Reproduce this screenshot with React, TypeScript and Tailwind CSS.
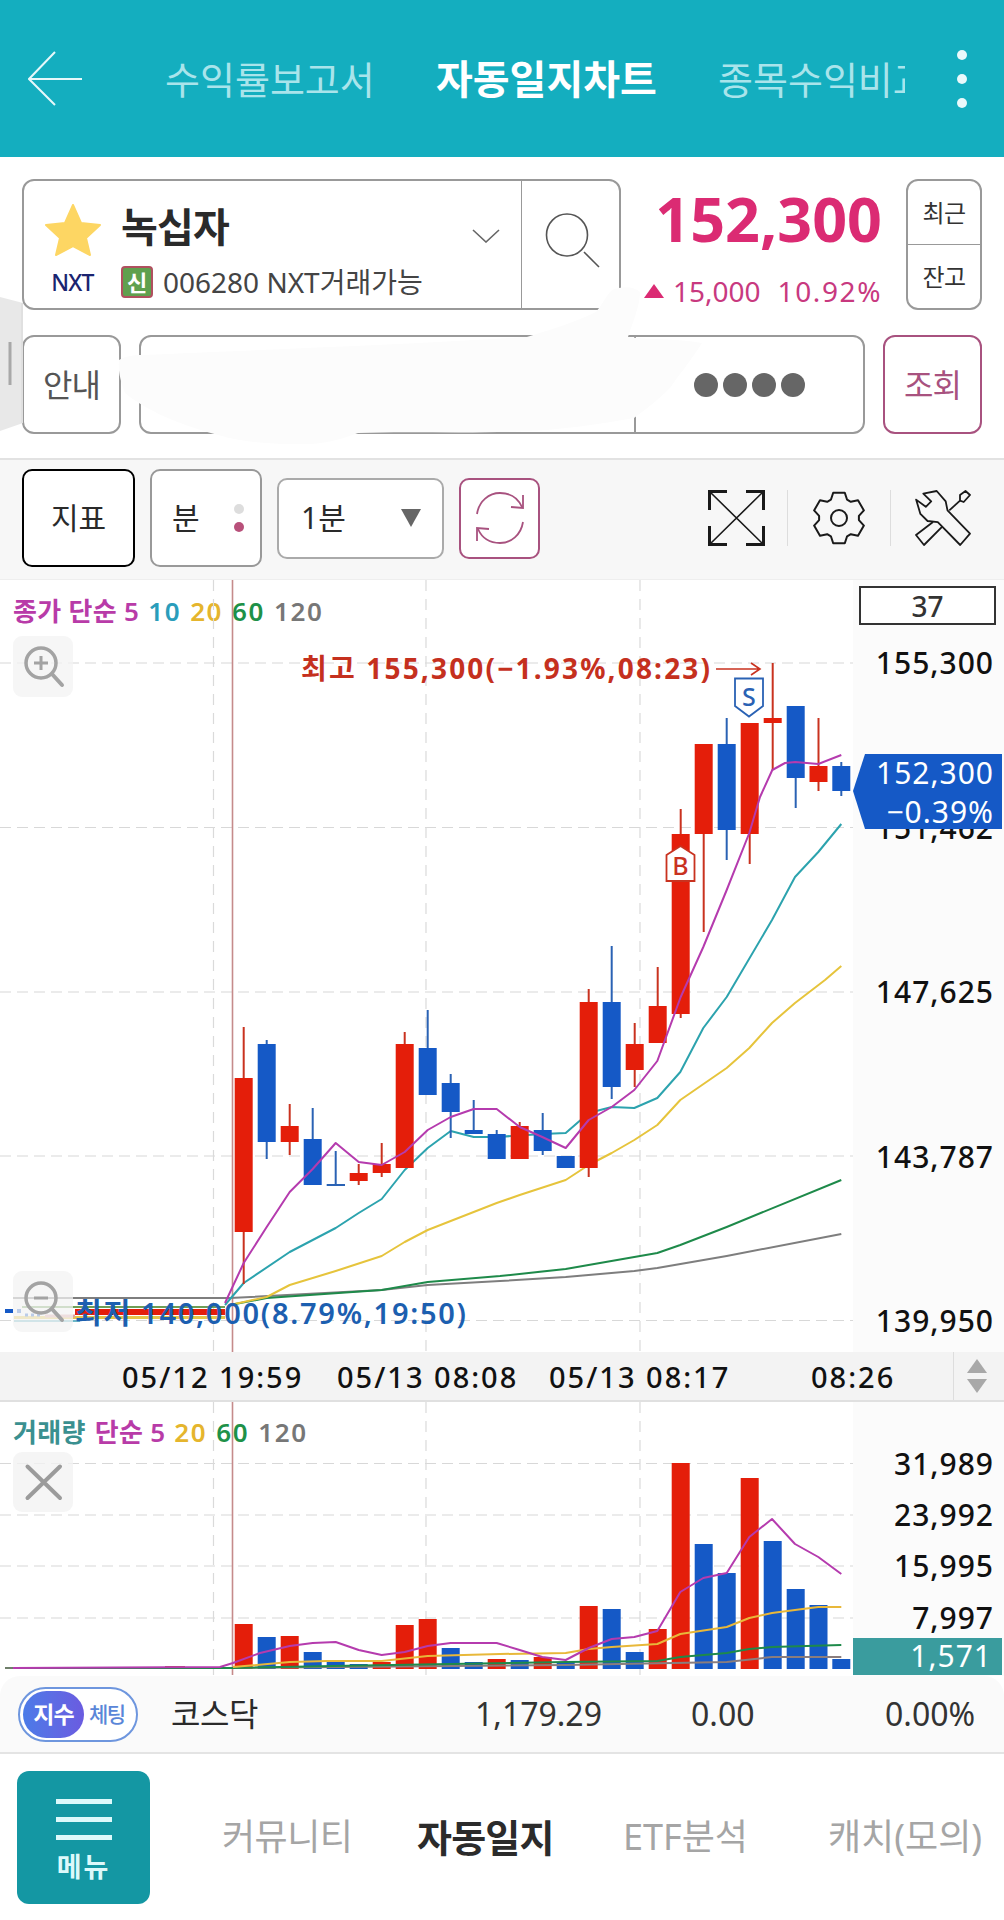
import React from "react";

type C = [number, "r" | "b", number, number, number, number];
// x, colour, wickTop, wickBottom, bodyTop, bodyBottom
const candles: C[] = [
  [243.7, "r", 1027, 1284, 1078, 1232],
  [266.7, "b", 1040, 1159, 1044, 1142],
  [289.7, "r", 1104, 1155, 1126, 1142],
  [312.7, "b", 1108, 1185, 1139, 1185],
  [335.7, "b", 1151, 1185, 1184, 1186],
  [358.7, "r", 1164, 1185, 1173, 1181],
  [381.7, "r", 1143, 1177, 1164, 1173],
  [404.7, "r", 1032, 1168, 1044, 1168],
  [427.7, "b", 1010, 1095, 1048, 1095],
  [450.7, "b", 1074, 1138, 1083, 1112],
  [473.7, "b", 1100, 1134, 1130, 1134],
  [496.7, "b", 1130, 1159, 1134, 1159],
  [519.7, "r", 1122, 1159, 1126, 1159],
  [542.7, "b", 1113, 1155, 1130, 1151],
  [565.7, "b", 1156, 1168, 1156, 1168],
  [588.7, "r", 989, 1177, 1002, 1168],
  [611.7, "b", 946, 1099, 1002, 1087],
  [634.7, "r", 1023, 1087, 1044, 1070],
  [657.7, "r", 967, 1043, 1006, 1043],
  [680.7, "r", 809, 1018, 834, 1014],
  [703.7, "r", 744, 932, 744, 834],
  [726.7, "b", 718, 860, 744, 830],
  [749.7, "r", 723, 864, 723, 834],
  [772.7, "r", 663, 770, 718, 723],
  [795.7, "b", 706, 808, 706, 778],
  [818.5, "r", 718, 791, 766, 782],
  [841.3, "b", 762, 796, 766, 791],
];

const RED = "#E41E0A";
const BLUE = "#1559C6";

const ma5 = "225,1303 243.7,1263 266.7,1227 289.7,1192 312.7,1169 335.7,1143 358.7,1162 381.7,1165 404.7,1152 427.7,1130 450.7,1117 473.7,1109 496.7,1109 519.7,1127 542.3,1137 565.7,1148 588.7,1120 611.7,1107 634.3,1090 657.3,1061 680.7,997 703.3,947 726.7,890 749.3,833 760,797 772.3,770 785,763 795.3,762 818.3,764 841.3,755";
const ma10 = "225,1305 243.7,1283 289.7,1252 335.7,1228 358.7,1213 381.7,1199 404.7,1170 427.7,1148 450.7,1131 473.7,1137 496.7,1137 542.3,1134 565.7,1133 588.7,1113 611.7,1107 634.3,1108 657.3,1098 680.3,1072 703.3,1028 726.7,997 736.7,980 772,920 795,877 818.3,852 841.3,824";
const ma20 = "230,1305 266.7,1297 289.7,1285 335.7,1271 381.7,1256 404.7,1242 427.7,1230 473.7,1212 496.7,1203 519.7,1195 565.7,1180 588.7,1165 611.7,1153 634.3,1140 657.3,1125 680.3,1100 726.7,1068 749.3,1048 772,1023 795,1003 825,980 841.3,966";
const ma60 = "230,1305 266.7,1298 381.7,1290 427.7,1282 500,1276 565.7,1269 634.3,1257 657.3,1253 680.3,1245 726.7,1227 841.3,1180";
const ma120 = "13,1298 230,1298 381.7,1290 427.7,1285 500,1281 565.7,1277 634.3,1271 657.3,1268 726.7,1256 841.3,1234";

const vols: [number, "r" | "b", number][] = [
  [243.7, "r", 1624], [266.7, "b", 1637], [289.7, "r", 1636], [312.7, "b", 1652], [335.7, "b", 1662],
  [358.7, "b", 1664], [381.7, "r", 1662], [404.7, "r", 1625], [427.7, "r", 1619], [450.7, "b", 1648],
  [473.7, "b", 1662], [496.7, "r", 1659], [519.7, "b", 1660], [542.7, "r", 1657], [565.7, "b", 1662],
  [588.7, "r", 1606], [611.7, "b", 1609], [634.7, "b", 1652], [657.7, "r", 1629], [680.7, "r", 1463],
  [703.7, "b", 1544], [726.7, "b", 1573], [749.7, "r", 1478], [772.7, "b", 1541], [795.7, "b", 1589],
  [818.5, "b", 1605], [841.3, "b", 1659],
];
const v5 = "13,1668 220,1667 233,1663 260,1653 289.7,1646 312.7,1643 335.7,1642 358.7,1650 381.7,1655 404.7,1652 427.7,1646 450.7,1643 496.7,1643 519.7,1650 542.3,1657 565.7,1660 588.7,1648 611.7,1639 634.3,1637 657.3,1631 680.3,1592 703.3,1578 726.7,1573 749.3,1537 772,1519 795,1544 818.3,1557 841.3,1574";
const v20 = "233,1667 289.7,1662 326.7,1661 381.7,1661 427.7,1656 500,1654 565.7,1653 588.7,1649 611.7,1647 657.3,1644 680.3,1634 726.7,1627 749.3,1618 772,1613 795,1610 818.3,1607 841.3,1607";
const v60 = "13,1668 233,1668 333,1666 565.7,1662 657.3,1661 680.3,1657 726.7,1653 749.3,1649 772,1647 841.3,1645";
const v120 = "13,1668 233,1668 565.7,1665 726.7,1662 772,1657 841.3,1657";

const gearPath = (() => {
  const pts: string[] = [];
  for (let i = 0; i < 6; i++) {
    const a = -90 + i * 60;
    for (const [d, r] of [[-24, 20], [-13, 26], [13, 26], [24, 20]] as [number, number][]) {
      const t = ((a + d) * Math.PI) / 180;
      pts.push(`${(28 + r * Math.cos(t)).toFixed(1)} ${(28 + r * Math.sin(t)).toFixed(1)}`);
    }
  }
  return "M" + pts.join("L") + "Z";
})();

function AxisLabel({ y, t }: { y: number; t: string }) {
  return (
    <text x={994} y={y + 10.5} textAnchor="end" fontSize={30} fontWeight={500} fill="#111" letterSpacing={1}>
      {t}
    </text>
  );
}

function Grid({ ys, top, bottom }: { ys: number[]; top: number; bottom: number }) {
  return (
    <g>
      {ys.map((y) => (
        <line key={y} x1={0} x2={853} y1={y} y2={y} stroke="#D8D8D8" strokeWidth={1.2} strokeDasharray="11 6" />
      ))}
      {[213.5, 426, 640].map((x) => (
        <line key={x} x1={x} x2={x} y1={top} y2={bottom} stroke="#DADADA" strokeWidth={1.2} strokeDasharray="11 8" />
      ))}
      <line x1={232.5} x2={232.5} y1={top} y2={bottom} stroke="#C58B8B" strokeWidth={1.6} />
    </g>
  );
}

function Poly({ p, c, w = 2 }: { p: string; c: string; w?: number }) {
  return <polyline points={p} fill="none" stroke={c} strokeWidth={w} strokeLinejoin="round" />;
}

function Lens({ cy, kind }: { cy: number; kind: "plus" | "minus" }) {
  return (
    <g>
      <rect x={13} y={cy - 27} width={60} height={61} rx={9} fill="#F3F3F3" fillOpacity={0.75} />
      <circle cx={41} cy={cy} r={15} fill="none" stroke="#A3A3A3" strokeWidth={3.5} />
      <line x1={52} y1={cy + 11} x2={62} y2={cy + 22} stroke="#A3A3A3" strokeWidth={4} strokeLinecap="round" />
      <line x1={34} x2={48} y1={cy} y2={cy} stroke="#A3A3A3" strokeWidth={3} />
      {kind === "plus" && <line x1={41} x2={41} y1={cy - 7} y2={cy + 7} stroke="#A3A3A3" strokeWidth={3} />}
    </g>
  );
}

function PriceChart() {
  return (
    <div className="relative flex h-[772px] w-full bg-white">
      <div className="flex-1" />
      <div className="w-[151px] bg-[#FBFBFB]" />
      <div className="absolute left-[13px] top-[16px] flex items-center gap-[9px] text-[26px] font-semibold leading-[30px]">
        <span className="tracking-[0.3px] text-[#B83BA8]">종가 단순 5</span>
        <span className="tracking-[1.6px] text-[#2A9DBB]">10</span>
        <span className="tracking-[1.6px] text-[#E5B52D]">20</span>
        <span className="tracking-[1.6px] text-[#1E9148]">60</span>
        <span className="tracking-[1.6px] text-[#777777]">120</span>
      </div>
      <div className="absolute left-[859px] top-[6px] flex h-[39px] w-[137px] items-center justify-center border-2 border-[#333] bg-white text-[28px] font-medium leading-none text-[#333]">
        37
      </div>
      <svg className="absolute inset-0 h-[772px] w-[1004px]" viewBox="0 580 1004 772">
        <Grid ys={[663, 827.5, 992, 1156, 1320.5]} top={580} bottom={1352} />
        {/* flat stretch before the open */}
        <g>
          <line x1={22} x2={225} y1={1307} y2={1307} stroke="#6E9E55" strokeWidth={2} />
          <line x1={14} x2={225} y1={1317.5} y2={1317.5} stroke="#E6C64A" strokeWidth={3} />
          <line x1={14} x2={80} y1={1321} y2={1321} stroke="#6CB8C8" strokeWidth={2} />
          <line x1={75} x2={225} y1={1312} y2={1312} stroke={RED} strokeWidth={6} />
          <line x1={45} x2={75} y1={1316} y2={1316} stroke="#E0A0A0" strokeWidth={3} />
          <line x1={5} x2={13} y1={1311} y2={1311} stroke={BLUE} strokeWidth={4} />
          <line x1={17} x2={21} y1={1311} y2={1311} stroke={BLUE} strokeWidth={4} />
          <line x1={25} x2={40} y1={1315} y2={1315} stroke={BLUE} strokeWidth={3} strokeDasharray="3 3" />
        </g>
        <Poly p={ma120} c="#7E7E7E" />
        <Poly p={ma60} c="#1E8A4A" />
        <Poly p={ma20} c="#E6C43C" />
        <Poly p={ma10} c="#2CA3AE" />
        {candles.map(([x, c, wt, wb, bt, bb]) => (
          <g key={x}>
            <line x1={x} x2={x} y1={wt} y2={wb} stroke={c === "r" ? "#C9321F" : "#2A62B4"} strokeWidth={2} />
            <rect x={x - 9} y={bt} width={18} height={bb - bt} fill={c === "r" ? RED : BLUE} />
          </g>
        ))}
        <line x1={327} x2={345} y1={1185} y2={1185} stroke="#2A62B4" strokeWidth={2} />
        <Poly p={ma5} c="#B53BAE" />
        <Lens cy={663} kind="plus" />
        <Lens cy={1298} kind="minus" />
        {/* markers */}
        <path d="M735 678.5H763V706L749 716.5L735 706Z" fill="#fff" stroke="#2A62B4" strokeWidth={1.8} />
        <text x={749} y={706} textAnchor="middle" fontSize={25} fontWeight={500} fill="#2A62B4">S</text>
        <path d="M666.5 881V855L680.5 846L694.5 855V881Z" fill="#fff" stroke="#C9321F" strokeWidth={1.8} />
        <text x={680.5} y={875} textAnchor="middle" fontSize={25} fontWeight={500} fill="#C9321F">B</text>
        <text x={301} y={679} fontSize={28} fontWeight={700} fill="#C5301E" textLength={409} lengthAdjust="spacing">최고 155,300(−1.93%,08:23)</text>
        <path d="M716 669H759M751 663L760 669L751 675" fill="none" stroke="#C9321F" strokeWidth={1.6} />
        <text x={75} y={1323.5} fontSize={29} fontWeight={600} fill="#1C5FB0" textLength={391} lengthAdjust="spacing">최저 140,000(8.79%,19:50)</text>
        {/* axis */}
        <AxisLabel y={663} t="155,300" />
        <AxisLabel y={828} t="151,462" />
        <AxisLabel y={992} t="147,625" />
        <AxisLabel y={1157} t="143,787" />
        <AxisLabel y={1321} t="139,950" />
        <path d="M853 791L865 754H1002V829H865Z" fill={BLUE} />
        <text x={994} y={784} textAnchor="end" fontSize={30} fill="#fff" letterSpacing={1}>152,300</text>
        <text x={994} y={823} textAnchor="end" fontSize={30} fill="#fff" letterSpacing={1}>−0.39%</text>
      </svg>
    </div>
  );
}

function VolumeChart() {
  return (
    <div className="relative flex h-[274px] w-full bg-white">
      <div className="flex-1" />
      <div className="w-[151px] bg-[#FBFBFB]" />
      <div className="absolute left-[13px] top-[15px] flex items-center gap-[9px] text-[26px] font-semibold leading-[30px]">
        <span className="tracking-[0.3px] text-[#3A9090]">거래량</span>
        <span className="tracking-[0.3px] text-[#B83BA8]">단순 5</span>
        <span className="tracking-[1.6px] text-[#E5B52D]">20</span>
        <span className="tracking-[1.6px] text-[#1E9148]">60</span>
        <span className="tracking-[1.6px] text-[#777777]">120</span>
      </div>
      <svg className="absolute inset-0 h-[274px] w-[1004px]" viewBox="0 1402 1004 274">
        <Grid ys={[1463.5, 1515, 1566, 1618]} top={1402} bottom={1675} />
        <rect x={165} y={1666} width={20} height={3} fill="#C0503F" />
        <line x1={5} x2={225} y1={1668} y2={1668} stroke="#6F7F6A" strokeWidth={2} />
        {vols.map(([x, c, t]) => (
          <rect key={x} x={x - 9} y={t} width={18} height={1669 - t} fill={c === "r" ? RED : BLUE} />
        ))}
        <Poly p={v120} c="#8A7D7D" />
        <Poly p={v60} c="#1E8A4A" />
        <Poly p={v20} c="#E8B83A" />
        <Poly p={v5} c="#B53BAE" />
        <rect x={13} y={1452} width={60} height={60} rx={9} fill="#F3F3F3" fillOpacity={0.8} />
        <path d="M27.5 1466.5L60 1498M60 1466.5L27.5 1498" stroke="#9B9B9B" strokeWidth={4} strokeLinecap="round" />
        <AxisLabel y={1464} t="31,989" />
        <AxisLabel y={1515} t="23,992" />
        <AxisLabel y={1566} t="15,995" />
        <AxisLabel y={1618} t="7,997" />
        <rect x={853} y={1638} width={149} height={37} fill="#3A9C9E" />
        <text x={992} y={1667} textAnchor="end" fontSize={30} fill="#fff" letterSpacing={1}>1,571</text>
      </svg>
    </div>
  );
}

export default function App() {
  return (
    <div className="flex h-[1920px] w-[1004px] flex-col overflow-hidden bg-white font-['Noto_Sans','Noto_Sans_CJK_KR',sans-serif]">
      {/* header */}
      <header className="flex h-[157px] shrink-0 items-center bg-[#14AEBF] text-[38px] leading-none">
        <svg className="ml-[28px] h-[56px] w-[56px] shrink-0" viewBox="0 0 56 56" fill="none" stroke="#E6F8FA" strokeWidth={2}>
          <path d="M1 28H54M27 1L1 28L27 54" />
        </svg>
        <span className="ml-[81px] w-[210px] whitespace-nowrap text-[#A9E4EB]">수익률보고서</span>
        <span className="ml-[61px] w-[222px] whitespace-nowrap text-[40px] font-bold text-white">자동일지차트</span>
        <span className="ml-[60px] w-[187px] overflow-hidden whitespace-nowrap text-[#A9E4EB]">종목수익비교</span>
        <div className="ml-[52px] flex flex-col gap-[14px]">
          <div className="h-[10px] w-[10px] rounded-full bg-[#EAF9FB]" />
          <div className="h-[10px] w-[10px] rounded-full bg-[#EAF9FB]" />
          <div className="h-[10px] w-[10px] rounded-full bg-[#EAF9FB]" />
        </div>
      </header>

      {/* stock section */}
      <section className="relative flex h-[301px] shrink-0 flex-col bg-white pl-[22px] pr-[22px] pt-[22px]">
        <div className="flex h-[131px]">
          <div className="flex h-full w-[599px] rounded-[12px] border-2 border-[#999]">
            <div className="relative grid flex-1 grid-cols-[97px_1fr] grid-rows-[85px_1fr]">
              <div className="flex items-center justify-center pt-[12px]">
                <svg className="h-[52px] w-[56px]" viewBox="0 0 56 52">
                  <path d="M28 1L36 19L55 21L41 34L45 51L28 42L11 51L15 34L1 21L20 19Z" fill="#FDD663" stroke="#FDD663" strokeWidth={2} strokeLinejoin="round" />
                </svg>
              </div>
              <div className="flex items-center justify-between pr-[21px] pt-[6px]">
                <span className="text-[40px] font-bold leading-none tracking-[-0.8px] text-[#2A2A2A]">녹십자</span>
                <svg className="mt-[18px] h-[14px] w-[28px]" viewBox="0 0 28 14" fill="none" stroke="#666" strokeWidth={1.6}>
                  <path d="M1 1L14 13L27 1" />
                </svg>
              </div>
              <div className="flex items-center justify-center pb-[14px] text-[23px] font-medium leading-none tracking-[-0.8px] text-[#1A2470]">NXT</div>
              <div className="flex items-center gap-[10px] pb-[14px]">
                <div className="flex h-[32px] w-[32px] items-center justify-center rounded-[4px] border-2 border-[#B0505F] bg-[#5FA04E] text-[22px] font-bold leading-none text-white">신</div>
                <span className="whitespace-nowrap text-[28px] leading-none text-[#444]">006280 NXT거래가능</span>
              </div>
            </div>
            <div className="flex w-[98px] items-center justify-center border-l border-[#999] pb-[8px] pl-[4px]">
              <svg className="h-[56px] w-[56px]" viewBox="0 0 56 56" fill="none" stroke="#555" strokeWidth={1.6}>
                <ellipse cx={22} cy={22} rx={20.5} ry={21} />
                <path d="M39 39L54 54" />
              </svg>
            </div>
          </div>
          <div className="flex flex-1 flex-col items-end pr-[24px]">
            <span className="mt-[8px] text-[61px] font-bold leading-[64px] text-[#DB2B73]">152,300</span>
            <div className="mt-[26px] flex items-center whitespace-nowrap text-[28px] leading-none text-[#C8397F]">
              <svg className="mr-[9px] h-[14px] w-[20px]" viewBox="0 0 20 14">
                <path d="M10 0L20 14H0Z" fill="#DB2B73" />
              </svg>
              <span>15,000</span>
              <span className="ml-[17px] tracking-[1.6px]">10.92%</span>
            </div>
          </div>
          <div className="flex h-full w-[76px] flex-col rounded-[12px] border-2 border-[#999] text-[24px] leading-none tracking-[-0.5px] text-[#333]">
            <div className="flex flex-1 items-center justify-center border-b border-[#999]">최근</div>
            <div className="flex flex-1 items-center justify-center">잔고</div>
          </div>
        </div>
        <div className="mt-[25px] flex h-[99px] gap-[18px]">
          <div className="flex w-[99px] items-center justify-center rounded-[12px] border-2 border-[#999] text-[32px] leading-none tracking-[-1px] text-[#555]">안내</div>
          <div className="flex flex-1 rounded-[12px] border-2 border-[#999]">
            <div className="w-[495px] border-r-2 border-[#999]" />
            <div className="flex flex-1 items-center justify-center gap-[5px]">
              <div className="h-[24px] w-[24px] rounded-full bg-[#666]" />
              <div className="h-[24px] w-[24px] rounded-full bg-[#666]" />
              <div className="h-[24px] w-[24px] rounded-full bg-[#666]" />
              <div className="h-[24px] w-[24px] rounded-full bg-[#666]" />
            </div>
          </div>
          <div className="flex w-[99px] items-center justify-center rounded-[12px] border-2 border-[#A8527F] text-[32px] leading-none tracking-[-1px] text-[#A8527F]">조회</div>
        </div>
        {/* side handle and the painted-out patch */}
        <svg className="pointer-events-none absolute inset-0 h-[301px] w-[1004px]" viewBox="0 157 1004 301">
          <path d="M0 297L23 303V423L0 431Z" fill="#E8E8E8" />
          <path d="M22 303V423" stroke="#D8D8D8" strokeWidth={1} />
          <line x1={10} x2={10} y1={342} y2={385} stroke="#A8A8A8" strokeWidth={3} />
          <path
            d="M596 312C604 302 606 296 612 290C622 286 634 286 640 292C640 306 632 324 628 337C650 340 675 338 702 343C690 362 678 376 670 388C660 398 648 408 634 418C600 424 560 430 525 431C470 434 410 431 358 433C340 440 320 445 300 444C275 444 245 443 218 435C180 425 145 410 125 393C120 380 118 370 119 360C128 355 136 355 143 355C250 350 400 345 527 337C550 330 575 322 596 312Z"
            fill="#FCFCFC"
          />
        </svg>
      </section>

      {/* toolbar */}
      <section className="flex h-[122px] shrink-0 items-center gap-[15px] border-b border-t-2 border-b-[#EEEEEE] border-t-[#E2E2E2] bg-[#F7F7F7] pb-[3px] pl-[22px] text-[30px] leading-none text-[#2A2A2A]">
        <div className="flex h-[98px] w-[113px] items-center justify-center rounded-[10px] border-2 border-black bg-white">지표</div>
        <div className="flex h-[98px] w-[112px] items-center justify-between rounded-[10px] border-2 border-[#999] bg-white pl-[20px] pr-[16px]">
          <span>분</span>
          <div className="flex flex-col gap-[8px]">
            <div className="h-[10px] w-[10px] rounded-full bg-[#DDDDDD]" />
            <div className="h-[10px] w-[10px] rounded-full bg-[#B8507A]" />
          </div>
        </div>
        <div className="flex h-[81px] w-[167px] items-center justify-between rounded-[10px] border-2 border-[#AAA] bg-white pl-[22px] pr-[21px]">
          <span>1분</span>
          <svg className="h-[18px] w-[20px]" viewBox="0 0 20 18">
            <path d="M0 0H20L10 18Z" fill="#666" />
          </svg>
        </div>
        <div className="flex h-[81px] w-[81px] items-center justify-center rounded-[10px] border-2 border-[#A8527F] bg-white">
          <svg className="h-[56px] w-[56px]" viewBox="0 0 56 56" fill="none" stroke="#A8527F" strokeWidth={1.8}>
            <path d="M5 24C7 11 17 3 28 3C38 3 46 8 50 17" />
            <path d="M51 5L51 18L39 17" />
            <path d="M51 32C49 45 39 53 28 53C18 53 10 48 6 39" />
            <path d="M5 51L5 38L17 39" />
          </svg>
        </div>
        <div className="ml-auto flex items-center pr-[33px]">
          <svg className="h-[56px] w-[57px]" viewBox="0 0 57 56" fill="none" stroke="#1A1A1A">
            <path d="M1 1L56 55M56 1L1 55" strokeWidth={1.6} />
            <path d="M19 1.5H1.5V20M38 1.5H55.5V20M19 54.5H1.5V36M38 54.5H55.5V36" strokeWidth={3} />
          </svg>
          <div className="ml-[22px] h-[56px] w-px bg-[#DDDDDD]" />
          <svg className="ml-[23px] h-[56px] w-[56px]" viewBox="0 0 56 56" fill="none" stroke="#1A1A1A" strokeWidth={2} strokeLinejoin="round">
            <path d={gearPath} />
            <circle cx={28} cy={28} r={8} />
          </svg>
          <div className="ml-[23px] h-[56px] w-px bg-[#DDDDDD]" />
          <svg className="ml-[24px] h-[56px] w-[56px]" viewBox="0 0 56 56" fill="none" stroke="#1A1A1A" strokeWidth={1.8} strokeLinejoin="round">
            <path d="M8.3 3.6L21.7 1L30.7 11.4L32.5 20.4L55 43.6L45.2 55L22.8 32.1L12.6 31L5.4 23.9L1.1 9.6L10.8 16.8L16.2 11.4Z" />
            <path d="M45 5L50.5 1L55 5L48.7 12L45 10.7Z" />
            <path d="M45 10.7L34.3 20.4" />
            <path d="M18 32L1 45L9 55L27 36.8" />
          </svg>
        </div>
      </section>

      <PriceChart />

      {/* date strip */}
      <section className="flex h-[50px] shrink-0 items-center border-b-2 border-[#E0E0E0] bg-[#F3F3F3] text-[29px] font-medium leading-none tracking-[2px] text-[#111]">
        <span className="ml-[122px] w-[215px] whitespace-nowrap">05/12 19:59</span>
        <span className="w-[212px] whitespace-nowrap">05/13 08:08</span>
        <span className="w-[262px] whitespace-nowrap">05/13 08:17</span>
        <span className="w-[142px] whitespace-nowrap">08:26</span>
        <div className="flex h-full flex-1 flex-col items-center justify-center gap-[6px] border-l border-[#DDDDDD] pr-[4px]">
          <svg className="h-[14px] w-[20px]" viewBox="0 0 20 14"><path d="M10 0L20 14H0Z" fill="#A8A8A8" /></svg>
          <svg className="h-[14px] w-[20px]" viewBox="0 0 20 14"><path d="M0 0H20L10 14Z" fill="#A8A8A8" /></svg>
        </div>
      </section>

      <VolumeChart />

      {/* index bar */}
      <section className="flex h-[78px] shrink-0 items-center rounded-t-[20px] border-b-2 border-[#E4E4E4] bg-[#FAFAFA] pl-[18px] text-[32px] leading-none text-[#333]">
        <div className="flex h-[55px] w-[120px] items-center rounded-full border-2 border-[#6E96DE] bg-white pl-[3px]">
          <div className="flex h-[47px] w-[61px] items-center justify-center rounded-full bg-gradient-to-r from-[#4A7BE8] to-[#6A5BE0] text-[23px] font-bold tracking-[-1px] text-white">지수</div>
          <span className="ml-[5px] whitespace-nowrap text-[21px] font-medium tracking-[-1.5px] text-[#5A86D8]">체팅</span>
        </div>
        <span className="ml-[33px] w-[304px] tracking-[-0.5px] text-[#2A2A2A]">코스닥</span>
        <span className="w-[216px]">1,179.29</span>
        <span className="w-[194px]">0.00</span>
        <span>0.00%</span>
      </section>

      {/* bottom nav */}
      <nav className="flex flex-1 items-center whitespace-nowrap text-[36px] leading-none text-[#A5A5A5]">
        <div className="ml-[17px] flex h-[133px] w-[133px] flex-col items-center rounded-[12px] bg-[#1497A3] pt-[28px]">
          <div className="h-[5px] w-[56px] bg-[#DDF9FB]" />
          <div className="mt-[13px] h-[5px] w-[56px] bg-[#DDF9FB]" />
          <div className="mt-[13px] h-[5px] w-[56px] bg-[#DDF9FB]" />
          <span className="mt-[13px] text-[27px] font-bold leading-none tracking-[2px] text-[#DDF9FB]">메뉴</span>
        </div>
        <span className="ml-[72px] w-[195px] tracking-[-0.5px]">커뮤니티</span>
        <span className="w-[206px] text-[38px] font-bold tracking-[-0.8px] text-[#2B2B2B]">자동일지</span>
        <span className="w-[205px]">ETF분석</span>
        <span>캐치(모의)</span>
      </nav>
    </div>
  );
}
